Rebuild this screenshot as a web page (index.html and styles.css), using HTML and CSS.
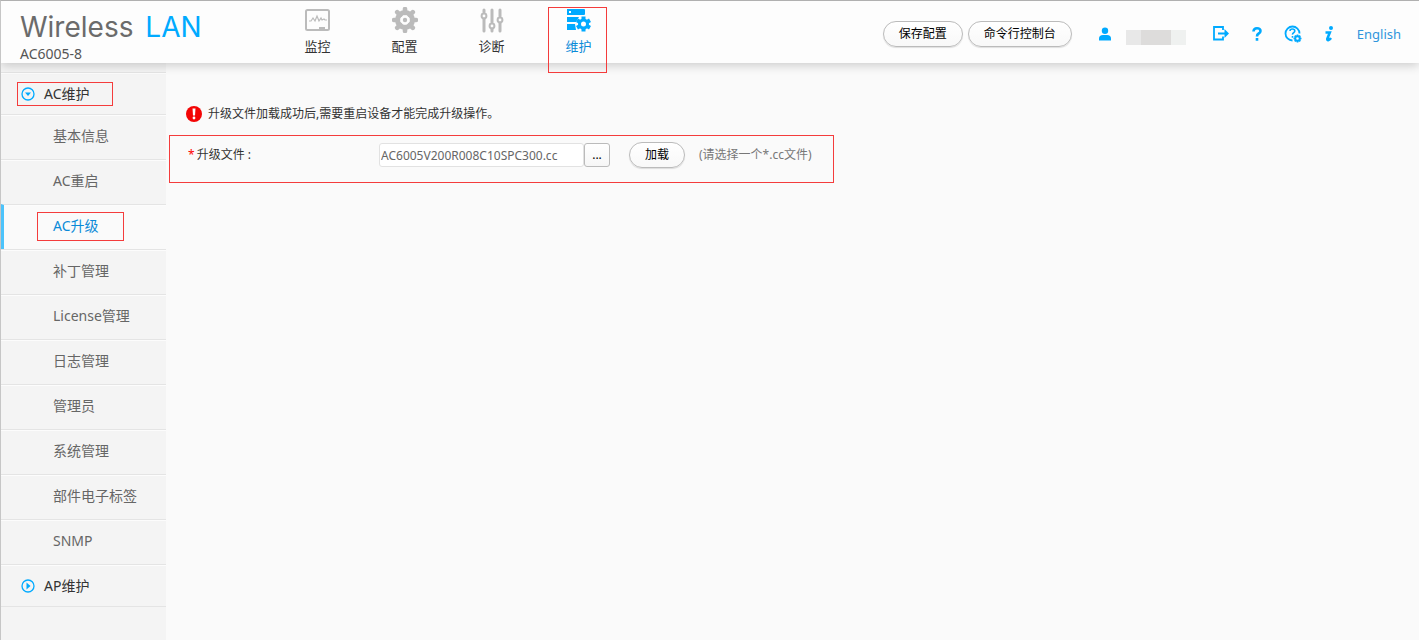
FILE: index.html
```html
<!DOCTYPE html>
<html lang="zh-CN">
<head>
<meta charset="utf-8">
<title>Wireless LAN AC6005-8</title>
<link rel="stylesheet" href="styles.css">
</head>
<body>
<header class="header">
  <div class="brand">
    <h1 class="brand-name">Wireless <span class="brand-accent">LAN</span></h1>
    <p class="brand-model">AC6005-8</p>
  </div>
  <nav class="main-nav">
    <a class="nav-item" href="#">
      <svg class="nav-icon" width="26" height="26" viewBox="0 0 26 26" fill="none" stroke="#bbb"><rect x="1" y="3" width="23" height="20" rx="1.5" stroke-width="2"/><path d="M4 14h2l2-3 2 3 2-5 2 5 2-3 1 2 2-1 1 1h2" stroke-width="1.2"/><path d="M14 21.5h6" stroke-width="3"/></svg>
      <span>监控</span>
    </a>
    <a class="nav-item" href="#">
      <svg class="nav-icon" width="26" height="26" viewBox="0 0 26 26" fill="none" stroke="#bbb"><circle cx="13" cy="13" r="7.5" stroke-width="5"/><circle cx="13" cy="13" r="2.2" fill="#bbb" stroke="none"/><path d="M13 2v4M13 20v4M2 13h4M20 13h4M5.2 5.2l3 3M17.8 17.8l3 3M5.2 20.8l3-3M17.8 8.2l3-3" stroke-width="4.600" stroke-linecap="round"/></svg>
      <span>配置</span>
    </a>
    <a class="nav-item" href="#">
      <svg class="nav-icon" width="26" height="26" viewBox="0 0 26 26" fill="none" stroke="#bbb" stroke-width="3" stroke-linecap="round"><path d="M5 3v2M5 12v12M13 3v12M13 22v2M21 3v6M21 16v8"/><g stroke-width="2"><circle cx="5" cy="9" r="2.4"/><circle cx="13" cy="19" r="2.4"/><circle cx="21" cy="13" r="2.4"/></g></svg>
      <span>诊断</span>
    </a>
    <a class="nav-item nav-item-active" href="#">
      <svg class="nav-icon" width="26" height="26" viewBox="0 0 26 26"><path fill="#0af" fill-rule="evenodd" d="M1 2h17a1 1 0 0 1 1 1v4a1 1 0 0 1-1 1H1zM3 4v2h2V4zM1 10h12l-3 5H1zM1 17h8l1 6H1z"/><path d="M17.500 9.500v15M11 13.200l13 7.500M11 20.700l13-7.500" stroke="#0af" stroke-width="4"/><circle cx="17.500" cy="17" r="4" fill="#fff" stroke="#0af" stroke-width="3"/></svg>
      <span>维护</span>
    </a>
  </nav>
  <div class="tools">
    <button class="pill" type="button">保存配置</button>
    <button class="pill" type="button">命令行控制台</button>
    <div class="user">
      <svg width="14" height="14" viewBox="0 0 14 14" fill="#0af"><circle cx="7" cy="3.7" r="3.2"/><path d="M1 13.5v-2Q1 8 5 8h4q4 0 4 3.500v2z"/></svg>
      <span class="user-name"></span>
    </div>
    <div class="tool-links">
      <a href="#" aria-label="退出"><svg width="18" height="18" viewBox="0 0 18 18" fill="none" stroke="#0af" stroke-width="1.800"><path d="M11 5V2H2v12.500h9v-3M6 8.500h8"/><path d="M12.500 4L17 8.500 12.500 13z" fill="#0af" stroke="none"/></svg></a>
      <a href="#" aria-label="帮助"><svg width="18" height="18" viewBox="0 0 18 18" fill="none" stroke="#0af" stroke-width="2.600"><path d="M5.500 6.500Q5.500 3.300 9 3.300t3.500 2.700q0 1.500-1.800 2.500T9 11.500M9 13v2.800"/></svg></a>
      <a href="#" aria-label="向导"><svg width="18" height="18" viewBox="0 0 18 18" fill="none" stroke="#0af"><path d="M15.500 8.500a7 7 0 1 0-7 7" stroke-width="1.800"/><path d="M6 6q0-2 2.400-2t2.400 2q0 1-1.200 1.700T8.500 9.600M8.500 11v1.800" stroke-width="1.600"/><circle cx="13.500" cy="13.500" r="2.300" stroke-width="2"/><path d="M13.500 9.500v1.400M13.500 16.100v1.400M9.500 13.500h1.400M16.100 13.500h1.400M10.700 10.700l1 1M15.300 15.300l1 1M10.700 16.300l1-1M15.300 11.700l1-1" stroke-width="1.700"/></svg></a>
      <a href="#" aria-label="关于"><svg width="18" height="18" viewBox="0 0 18 18" fill="none" stroke="#0af"><circle cx="11" cy="3" r="2" fill="#0af" stroke="none"/><path d="M5.500 7.500h4.300L7.300 13.800q-.2 1.700 1.200 1.200t2.500-2" stroke-width="2.600"/></svg></a>
    </div>
    <a class="language" href="#">English</a>
  </div>
</header>
<div class="body">
  <nav class="sidebar">
    <a class="group" href="#"><span class="mark mark-group"><svg width="14" height="14" viewBox="0 0 14 14"><circle cx="7" cy="7" r="6" fill="none" stroke="#0af" stroke-width="1.300"/><path d="M4 5.500h6L7 9z" fill="#0af"/></svg>AC维护</span></a>
    <a class="entry" href="#">基本信息</a>
    <a class="entry" href="#">AC重启</a>
    <a class="entry entry-active" href="#"><span class="mark mark-entry">AC升级</span></a>
    <a class="entry" href="#">补丁管理</a>
    <a class="entry" href="#">License管理</a>
    <a class="entry" href="#">日志管理</a>
    <a class="entry" href="#">管理员</a>
    <a class="entry" href="#">系统管理</a>
    <a class="entry" href="#">部件电子标签</a>
    <a class="entry" href="#">SNMP</a>
    <a class="group" href="#"><svg width="14" height="14" viewBox="0 0 14 14"><circle cx="7" cy="7" r="6" fill="none" stroke="#0af" stroke-width="1.300"/><path d="M5.500 3.500L9.500 7l-4 3.500z" fill="#0af"/></svg>AP维护</a>
  </nav>
  <main class="content">
    <p class="notice"><svg width="16" height="16" viewBox="0 0 16 16"><circle cx="8" cy="8" r="8" fill="#f30505"/><path d="M6.500 2.500h3L9 9.500H7z" fill="#fff"/><circle cx="8" cy="12" r="1.400" fill="#fff"/></svg>升级文件加载成功后,需要重启设备才能完成升级操作。</p>
    <form class="upload">
      <label class="upload-label" for="file"><span class="required">*</span>升级文件 :</label>
      <input class="file-name" id="file" type="text" value="AC6005V200R008C10SPC300.cc">
      <button class="browse" type="button">...</button>
      <button class="pill load" type="button">加载</button>
      <span class="hint">(请选择一个*.cc文件)</span>
    </form>
  </main>
</div>
</body>
</html>
```
FILE: styles.css
```css
*,
*::after {
  box-sizing: border-box;
}

body {
  margin: 0;
  min-height: 100vh;
  display: flex;
  flex-direction: column;
  border-top: 1px solid #b0b0b0;
  border-left: 1px solid #c6c6c6;
  background: #fafafa;
  color: #333;
  font: 12px/18px "Noto Sans", "Noto Sans CJK SC", sans-serif;
}

a {
  color: inherit;
  text-decoration: none;
}

svg {
  display: block;
  flex: none;
}

h1,
p {
  margin: 0;
}

.header {
  position: relative;
  display: flex;
  align-items: center;
  height: 62px;
  background: #fdfdfd;
  box-shadow: 0 2px 10px rgba(0, 0, 0, 0.2);
}

.brand {
  width: 273px;
  padding: 9px 0 0 19px;
}

.brand-name {
  color: #6b6b6b;
  font: 400 28px/34px Inter, sans-serif;
}

.brand-accent {
  margin-left: 4px;
  color: #0af;
}

.brand-model {
  color: #555;
  font-size: 14px;
  line-height: 20px;
}

.main-nav {
  display: flex;
  align-self: flex-start;
}

.nav-item {
  position: relative;
  display: flex;
  flex-direction: column;
  align-items: center;
  width: 87px;
  padding-top: 6px;
  font-size: 13px;
  line-height: 26px;
}

.nav-item-active {
  color: #0a8ad8;
}

.nav-item-active::after {
  content: "";
  position: absolute;
  top: 6px;
  left: 13px;
  width: 59px;
  height: 66px;
  border: 1px solid #f43c3c;
}

.tools {
  display: flex;
  align-items: center;
  margin-left: auto;
  padding: 4px 18px 0 0;
}

.pill {
  height: 26px;
  padding: 0 15px;
  border: 1px solid #bbb;
  border-radius: 13px;
  background: linear-gradient(#fff, #f8f8f8);
  box-shadow: 0 1px 1px rgba(0, 0, 0, 0.12);
  color: #000;
  font: inherit;
}

.pill + .pill {
  margin-left: 5px;
}

.user {
  display: flex;
  align-items: center;
  gap: 14px;
  margin-left: 26px;
}

.user-name {
  width: 60px;
  height: 15px;
  margin-top: 6px;
  background: linear-gradient(90deg, #e8e8e8 25%, #dddcdb 25% 75%, #eff1f0 75%);
}

.tool-links {
  display: flex;
  gap: 18px;
  margin: 0 19px 0 26px;
}

.language {
  color: #2f95dc;
  font-size: 13px;
}

.body {
  display: flex;
  flex: 1;
}

.sidebar {
  width: 165px;
  padding-top: 9px;
  background: #f4f4f4;
}

.group,
.entry {
  display: flex;
  align-items: center;
  border-top: 1px solid #e4e4e4;
  box-shadow: inset 0 1px #fcfcfc;
  font-size: 14px;
}

.group {
  height: 42px;
  gap: 9px;
  padding-left: 20px;
}

.group:last-child {
  height: 43px;
  border-bottom: 1px solid #e4e4e4;
}

.entry {
  height: 45px;
  padding: 0 0 2px 52px;
  color: #666;
}

.entry-active {
  padding-left: 49px;
  border-left: 3px solid #4cc3fb;
  background: #fafafa;
  color: #0a8ad8;
}

.mark {
  position: relative;
  display: flex;
  align-items: center;
  gap: 9px;
}

.mark::after {
  content: "";
  position: absolute;
  border: 1px solid #f43c3c;
}

.mark-group::after {
  inset: -3px -23px -3px -4px;
}

.mark-entry::after {
  inset: -5px -25px -6px -16px;
}

.content {
  flex: 1;
  padding: 42px 3px;
}

.notice {
  display: flex;
  align-items: center;
  gap: 6px;
  padding-left: 17px;
}

.upload {
  display: flex;
  width: fit-content;
  align-items: center;
  height: 48px;
  margin-top: 12px;
  padding: 0 21px 8px 18px;
  border: 1px solid #f43c3c;
}

.upload-label {
  width: 191px;
}

.required {
  margin-right: 2px;
  color: #f00;
}

.file-name {
  width: 205px;
  height: 24px;
  padding: 0 1px;
  border: 1px solid #e2e2e2;
  border-radius: 3px;
  background: #fff;
  color: #666;
  font: inherit;
}

.browse {
  width: 26px;
  height: 24px;
  padding: 0;
  border: 1px solid #bbb;
  border-radius: 3px;
  background: linear-gradient(#fff, #f6f6f6);
  color: #000;
  font: inherit;
}

.load {
  margin: 0 14px 0 19px;
}

.hint {
  color: #777;
}
```
